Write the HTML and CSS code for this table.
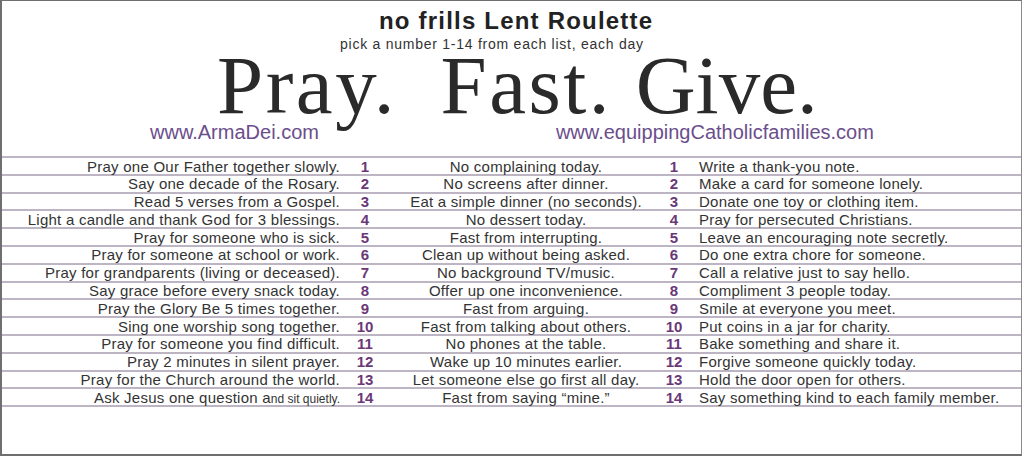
FILE: index.html
```html
<!DOCTYPE html>
<html>
<head>
<meta charset="utf-8">
<link rel="stylesheet" href="styles.css">
</head>
<body>
<div class="page">
  <div class="head">
    <div class="kicker">no frills Lent Roulette</div>
    <div class="sub">pick a number 1-14 from each list, each day</div>
    <div class="title"><span class="w1">Pray.</span><span class="w2">Fast.</span><span class="w3">Give.</span></div>
    <div class="urls"><span class="u1">www.ArmaDei.com</span><span class="u2">www.equippingCatholicfamilies.com</span></div>
  </div>
  <div class="table">
    <div class="row"><span class="pray">Pray one Our Father together slowly.</span><span class="n1">1</span><span class="fast">No complaining today.</span><span class="n2">1</span><span class="give">Write a thank-you note.</span></div>
    <div class="row"><span class="pray">Say one decade of the Rosary.</span><span class="n1">2</span><span class="fast">No screens after dinner.</span><span class="n2">2</span><span class="give">Make a card for someone lonely.</span></div>
    <div class="row"><span class="pray">Read 5 verses from a Gospel.</span><span class="n1">3</span><span class="fast">Eat a simple dinner (no seconds).</span><span class="n2">3</span><span class="give">Donate one toy or clothing item.</span></div>
    <div class="row"><span class="pray">Light a candle and thank God for 3 blessings.</span><span class="n1">4</span><span class="fast">No dessert today.</span><span class="n2">4</span><span class="give">Pray for persecuted Christians.</span></div>
    <div class="row"><span class="pray">Pray for someone who is sick.</span><span class="n1">5</span><span class="fast">Fast from interrupting.</span><span class="n2">5</span><span class="give">Leave an encouraging note secretly.</span></div>
    <div class="row"><span class="pray">Pray for someone at school or work.</span><span class="n1">6</span><span class="fast">Clean up without being asked.</span><span class="n2">6</span><span class="give">Do one extra chore for someone.</span></div>
    <div class="row"><span class="pray">Pray for grandparents (living or deceased).</span><span class="n1">7</span><span class="fast">No background TV/music.</span><span class="n2">7</span><span class="give">Call a relative just to say hello.</span></div>
    <div class="row"><span class="pray">Say grace before every snack today.</span><span class="n1">8</span><span class="fast">Offer up one inconvenience.</span><span class="n2">8</span><span class="give">Compliment 3 people today.</span></div>
    <div class="row"><span class="pray">Pray the Glory Be 5 times together.</span><span class="n1">9</span><span class="fast">Fast from arguing.</span><span class="n2">9</span><span class="give">Smile at everyone you meet.</span></div>
    <div class="row"><span class="pray">Sing one worship song together.</span><span class="n1">10</span><span class="fast">Fast from talking about others.</span><span class="n2">10</span><span class="give">Put coins in a jar for charity.</span></div>
    <div class="row"><span class="pray">Pray for someone you find difficult.</span><span class="n1">11</span><span class="fast">No phones at the table.</span><span class="n2">11</span><span class="give">Bake something and share it.</span></div>
    <div class="row"><span class="pray">Pray 2 minutes in silent prayer.</span><span class="n1">12</span><span class="fast">Wake up 10 minutes earlier.</span><span class="n2">12</span><span class="give">Forgive someone quickly today.</span></div>
    <div class="row"><span class="pray">Pray for the Church around the world.</span><span class="n1">13</span><span class="fast">Let someone else go first all day.</span><span class="n2">13</span><span class="give">Hold the door open for others.</span></div>
    <div class="row"><span class="pray">Ask Jesus one question a<span class="small">nd sit quietly.</span></span><span class="n1">14</span><span class="fast">Fast from saying “mine.”</span><span class="n2">14</span><span class="give">Say something kind to each family member.</span></div>
  </div>
</div>
</body>
</html>
```

FILE: styles.css
```css
html, body {
  margin: 0;
  padding: 0;
  background: #ffffff;
}
.page {
  box-sizing: border-box;
  width: 1022px;
  height: 456px;
  border-left: 2px solid #6f6f6f;
  border-top: 1px solid #6f6f6f;
  border-right: 1px solid #8a8a8a;
  border-bottom: 2px solid #6f6f6f;
  font-family: "Liberation Sans", Arial, sans-serif;
  color: #333333;
  overflow: hidden;
}
.head {
  padding-top: 8px;
  height: 147px;
  box-sizing: border-box;
}
.kicker {
  font-size: 24px;
  font-weight: bold;
  letter-spacing: 1.2px;
  line-height: 24px;
  height: 24px;
  color: #222222;
  padding-left: 377px;
  white-space: nowrap;
}
.sub {
  font-size: 14px;
  letter-spacing: 0.75px;
  line-height: 14px;
  height: 14px;
  margin-top: 3.5px;
  padding-left: 338px;
  color: #333333;
  white-space: nowrap;
}
.title {
  font-family: "Liberation Serif", "Times New Roman", serif;
  font-size: 83px;
  line-height: 70px;
  height: 70px;
  margin-top: -0.5px;
  color: #2a2a2a;
  white-space: nowrap;
  padding-left: 215px;
}
.w1, .w2 { letter-spacing: 2.5px; }
.w2 { margin-left: 43.5px; }
.w3 { margin-left: 23.5px; }
.urls {
  font-size: 20px;
  line-height: 22px;
  height: 22px;
  margin-top: 1px;
  color: #6b4e8c;
  padding-left: 148px;
  white-space: nowrap;
}
.u2 { margin-left: 237px; }
.table {
  margin-top: 8px;
  border-top: 2px solid #bdb5c4;
}
.row {
  display: grid;
  grid-template-columns: 338px 50px 272px 24px 1fr;
  height: 17.8px;
  box-sizing: border-box;
  border-bottom: 2px solid #bdb5c4;
  font-size: 15px;
  letter-spacing: 0.25px;
  line-height: 14px;
  padding-top: 1.5px;
  white-space: nowrap;
}
.pray { text-align: right; }
.fast { text-align: center; }
.give { padding-left: 13px; }
.n1, .n2 {
  text-align: center;
  font-weight: bold;
  letter-spacing: 0;
  color: #6a3878;
}
.small { font-size: 12px; letter-spacing: 0; }
```
